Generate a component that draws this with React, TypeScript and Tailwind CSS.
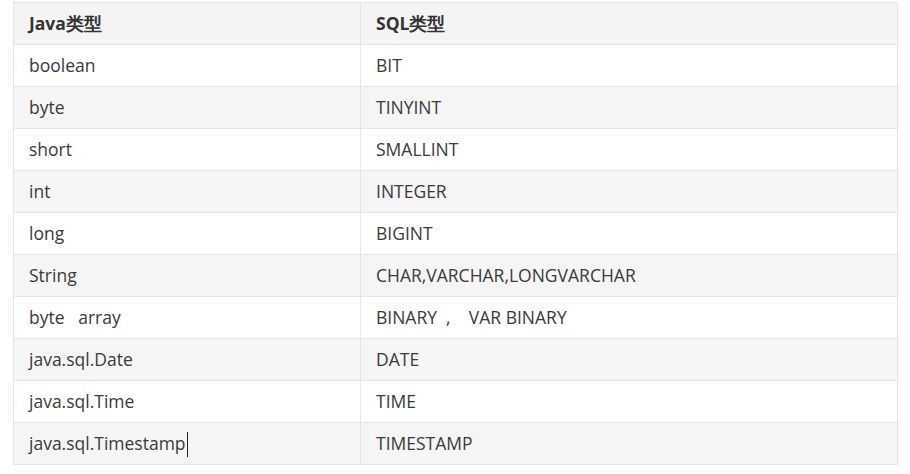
import React from 'react';

const rows: [string, string][] = [
  ['boolean', 'BIT'],
  ['byte', 'TINYINT'],
  ['short', 'SMALLINT'],
  ['int', 'INTEGER'],
  ['long', 'BIGINT'],
  ['String', 'CHAR,VARCHAR,LONGVARCHAR'],
  ['byte\u00a0\u00a0\u00a0array', 'BINARY\u00a0\u00a0,\u00a0\u00a0\u00a0\u00a0VAR BINARY'],
  ['java.sql.Date', 'DATE'],
  ['java.sql.Time', 'TIME'],
  ['java.sql.Timestamp', 'TIMESTAMP'],
];

const App = () => {
  return (
    <div className="h-[474px] w-[910px] bg-white pl-[13px] pt-[2px] font-['Open_Sans',sans-serif] text-[17.5px] text-[#3a3a3a]">
      <table className="w-[885px] table-fixed border-collapse border border-[#e5e5e5]">
        <colgroup>
          <col className="w-[347px]" />
          <col />
        </colgroup>
        <thead>
          <tr className="h-[42px] bg-[#f4f4f4]">
            <th className="border border-[#e5e5e5] px-[15px] text-left font-bold text-[#333]">
              Java类型
            </th>
            <th className="border border-[#e5e5e5] px-[15px] text-left font-bold text-[#333]">
              SQL类型
            </th>
          </tr>
        </thead>
        <tbody>
          {rows.map(([java, sql], i) => (
            <tr key={i} className={i % 2 === 0 ? 'h-[42px] bg-white' : 'h-[42px] bg-[#f5f5f5]'}>
              <td className="border border-[#e5e5e5] px-[15px] whitespace-nowrap">
                {java}
                {i === rows.length - 1 && (
                  <span className="ml-[1px] inline-block h-[25px] w-[1px] bg-[#222] align-middle" />
                )}
              </td>
              <td className="border border-[#e5e5e5] px-[15px] whitespace-nowrap">{sql}</td>
            </tr>
          ))}
        </tbody>
      </table>
    </div>
  );
};

export default App;
